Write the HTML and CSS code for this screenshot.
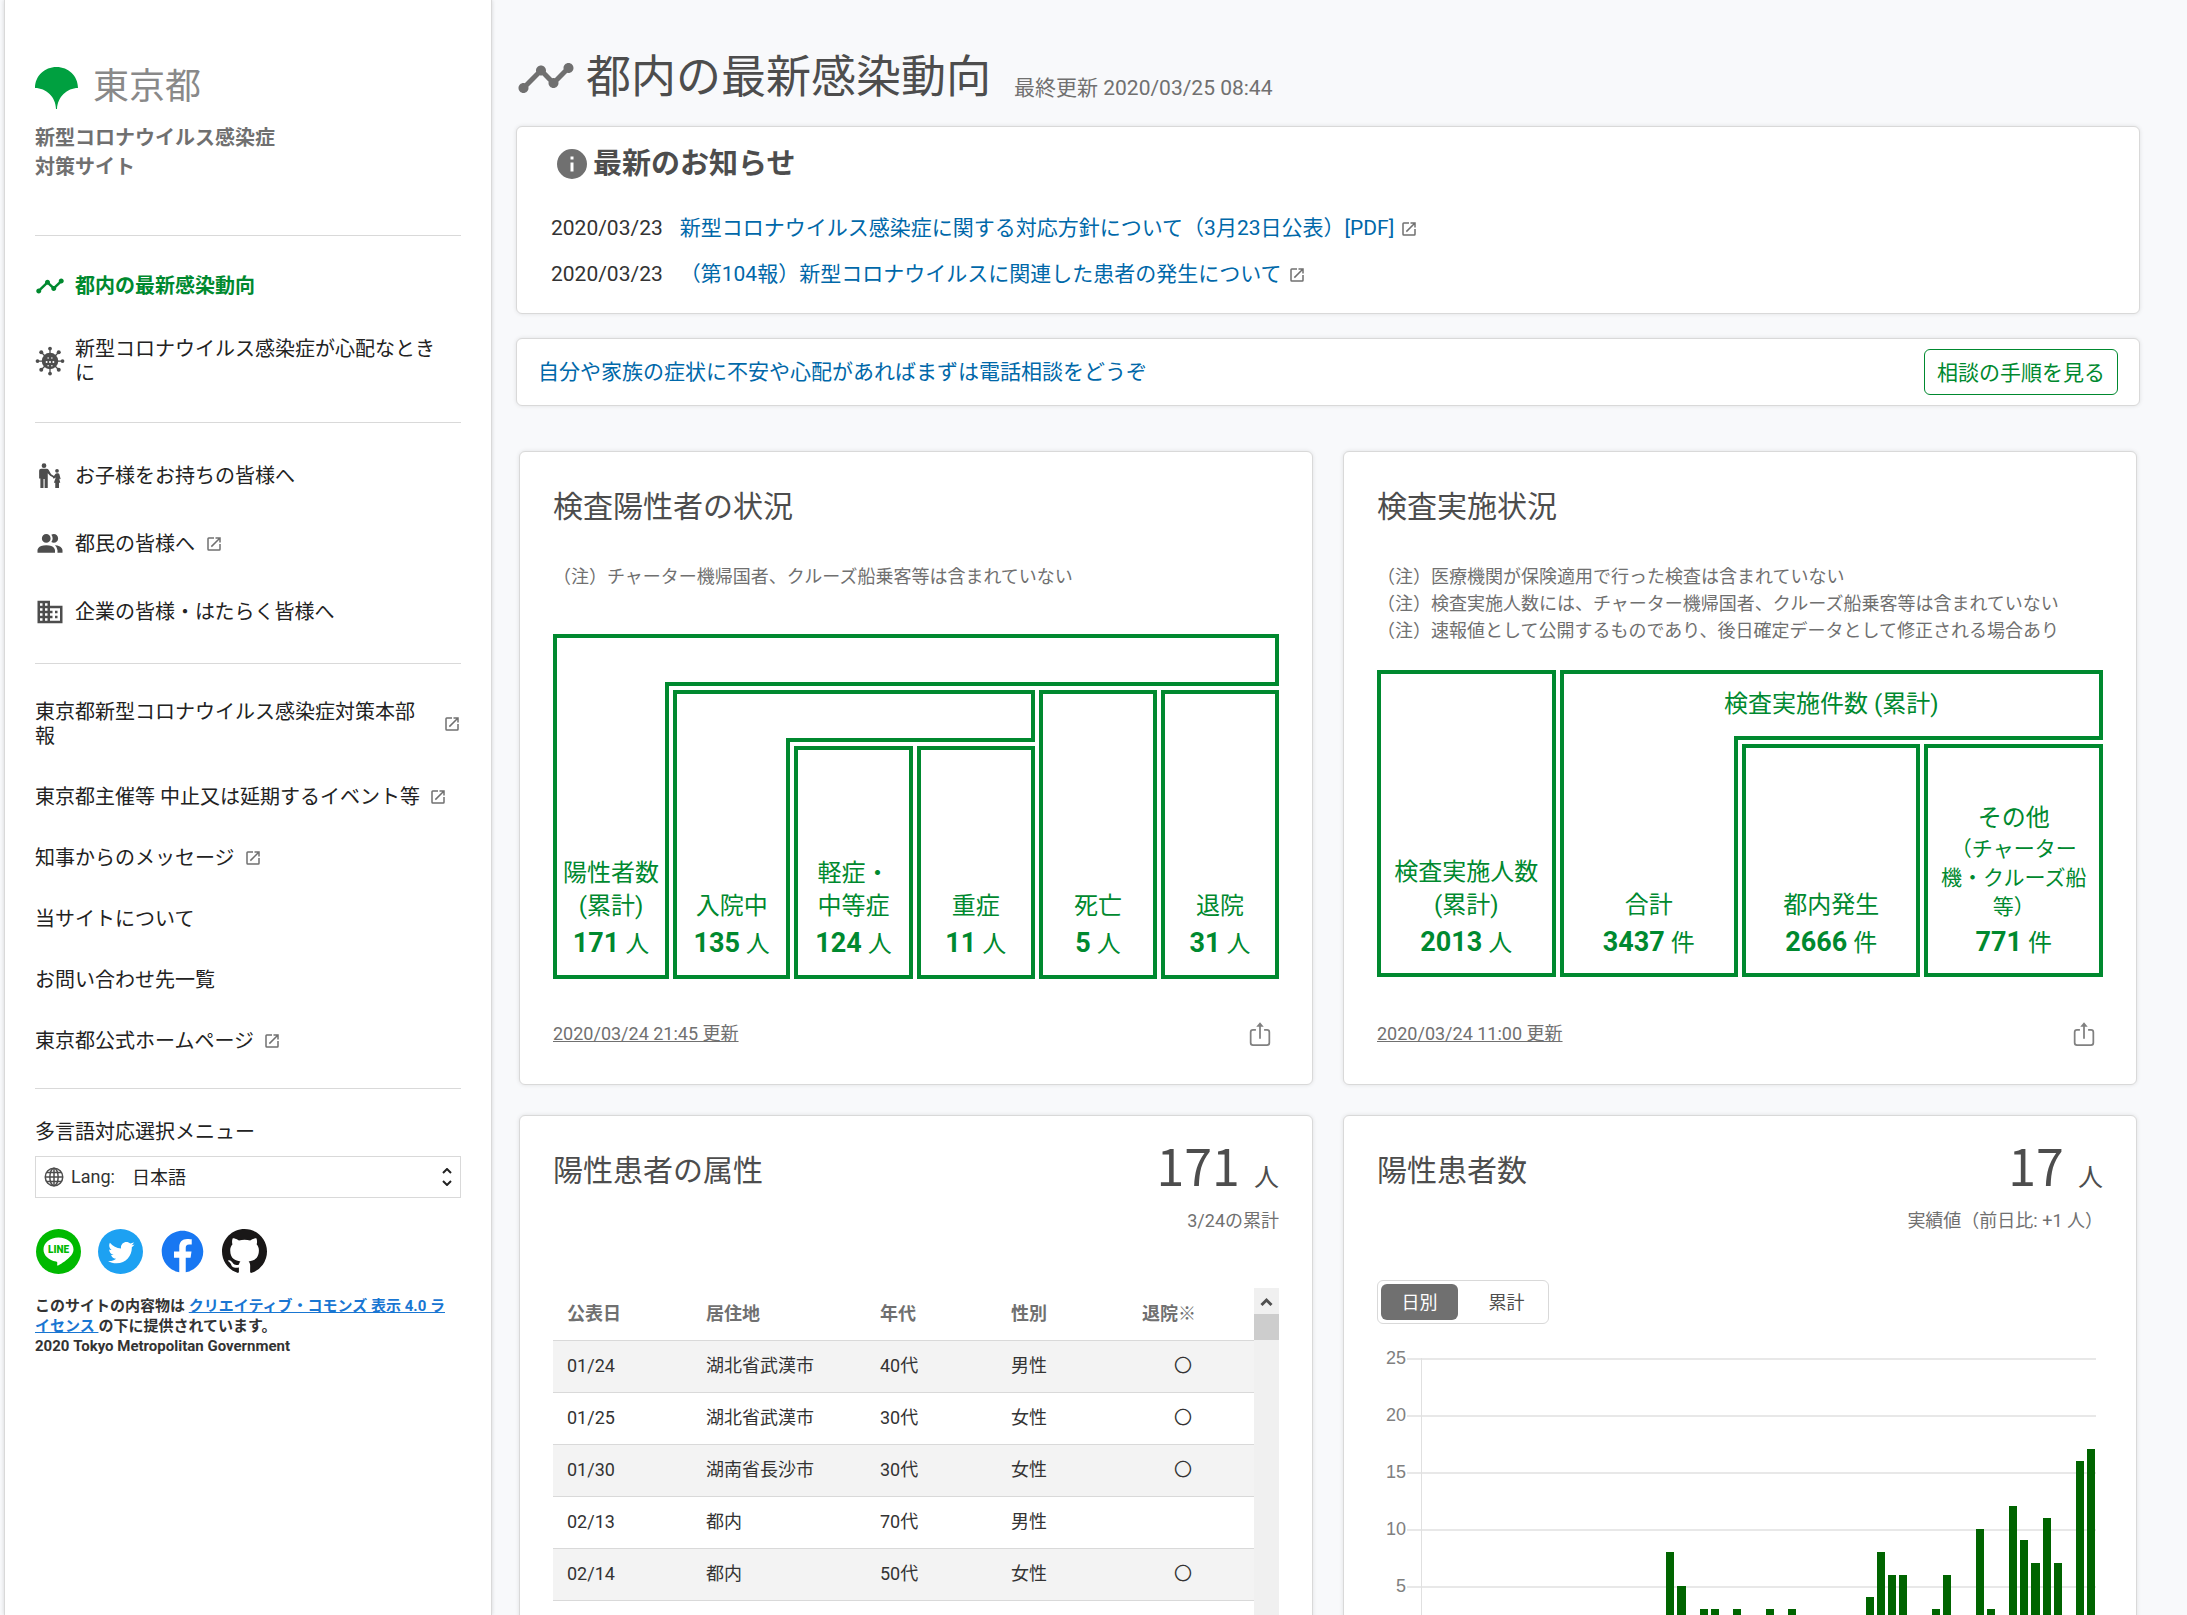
FILE: index.html
```
<!DOCTYPE html>
<html lang="ja">
<head>
    <meta charset="UTF-8">
    <meta name="viewport" content="width=device-width, initial-scale=1.0">
    <title>都内の最新感染動向 | 東京都 新型コロナウイルス感染症対策サイト</title>
    <link rel="stylesheet" href="styles.css">
</head>
<body>
    <!-- icons -->
    <svg class="sprite" aria-hidden="true">
        <symbol id="i-timeline" viewBox="0 0 24 24">
            <path d="M23 8c0 1.1-.9 2-2 2-.18 0-.35-.02-.51-.07l-3.56 3.55c.05.16.07.34.07.52 0 1.1-.9 2-2 2s-2-.9-2-2c0-.18.02-.36.07-.52l-2.55-2.55c-.16.05-.34.07-.52.07s-.36-.02-.52-.07l-4.55 4.56c.05.16.07.33.07.51 0 1.1-.9 2-2 2s-2-.9-2-2 .9-2 2-2c.18 0 .35.02.51.07l4.56-4.55C8.02 9.36 8 9.18 8 9c0-1.1.9-2 2-2s2 .9 2 2c0 .18-.02.36-.07.52l2.55 2.55c.16-.05.34-.07.52-.07s.36.02.52.07l3.55-3.56C19.02 8.35 19 8.18 19 8c0-1.1.9-2 2-2s2 .9 2 2z"/>
        </symbol>
        <symbol id="i-external" viewBox="0 0 24 24">
            <path d="M14 3v2h3.59l-9.83 9.83 1.41 1.41L19 6.41V10h2V3m-2 16H5V5h7V3H5a2 2 0 0 0-2 2v14a2 2 0 0 0 2 2h14a2 2 0 0 0 2-2v-7h-2v7z"/>
        </symbol>
        <symbol id="i-info" viewBox="0 0 24 24">
            <path d="M13 9h-2V7h2m0 10h-2v-6h2m-1-9a10 10 0 1 0 0 20 10 10 0 0 0 0-20z"/>
        </symbol>
        <symbol id="i-people" viewBox="0 0 24 24">
            <path d="M16 17v2H2v-2s0-4 7-4 7 4 7 4m-3.5-9.5A3.5 3.5 0 1 0 9 11a3.5 3.5 0 0 0 3.5-3.5m3.44 5.5A5.32 5.32 0 0 1 18 17v2h4v-2s0-3.63-6.06-4M15 4a3.39 3.39 0 0 0-1.93.59 5 5 0 0 1 0 5.82A3.39 3.39 0 0 0 15 11a3.5 3.5 0 0 0 0-7z"/>
        </symbol>
        <symbol id="i-building" viewBox="0 0 24 24">
            <path d="M18 15h-2v2h2m0-6h-2v2h2m2 6h-8v-2h2v-2h-2v-2h2v-2h-2V9h8M10 7H8V5h2m0 6H8V9h2m0 6H8v-2h2m0 6H8v-2h2M6 7H4V5h2m0 6H4V9h2m0 6H4v-2h2m0 6H4v-2h2m6-10V3H2v18h20V7H12z"/>
        </symbol>
        <symbol id="i-share" viewBox="0 0 24 24">
            <path d="M8.5 8.500H6A2 2 0 0 0 4 10.500v9A2 2 0 0 0 6 21.500h12a2 2 0 0 0 2-2v-9A2 2 0 0 0 18 8.500h-2.500M12 16V4" fill="none" stroke="currentColor" stroke-width="1.500"/>
            <path d="M12 2l3.200 3.800H8.800z"/>
        </symbol>
        <symbol id="i-family" viewBox="0 0 24 24">
            <circle cx="7.200" cy="3.700" r="1.900"/>
            <circle cx="17.600" cy="7.800" r="1.500"/>
            <path d="M5 6.200h4.400c.7 0 1.200.3 1.600.9l1.900 3.400 2.600 1.700-.6 1.100-2.800-1.600-1.900-2v11.900H7.700v-7.200h-.9v7.200H4.300V14H3.300V7.900C3.300 6.900 4 6.200 5 6.200z"/>
            <path d="M16.700 9.700h1.600c.6 0 1 .3 1.200.9l1 3.700-.8.3-.5-1 1 3.800h-1v4.200h-3v-4.200h-1.100l1.500-4.300-1.700 1.100-.6-1 2-2.800c.2-.4.700-.7 1.400-.7z"/>
        </symbol>
        <symbol id="i-virus" viewBox="0 0 24 24">
            <path d="M12 2v20M2 12h20M5 5l14 14M19 5L5 19" stroke="currentColor" stroke-width="1"/>
            <circle cx="12" cy="12" r="6.600"/>
            <circle cx="12" cy="2" r="1.500"/><circle cx="12" cy="22" r="1.500"/>
            <circle cx="2" cy="12" r="1.500"/><circle cx="22" cy="12" r="1.500"/>
            <circle cx="5" cy="5" r="1.600"/><circle cx="19" cy="5" r="1.600"/>
            <circle cx="5" cy="19" r="1.600"/><circle cx="19" cy="19" r="1.600"/>
            <g fill="#fff">
                <circle cx="9.300" cy="12.700" r=".8"/><circle cx="12" cy="12.700" r=".8"/><circle cx="14.700" cy="12.700" r=".8"/>
                <circle cx="10.500" cy="9.500" r=".6"/><circle cx="13.500" cy="9.500" r=".6"/>
                <circle cx="10.500" cy="15.700" r=".6"/><circle cx="13.500" cy="15.700" r=".6"/>
            </g>
        </symbol>
        <symbol id="i-globe" viewBox="0 0 24 24">
            <g fill="none" stroke="currentColor" stroke-width="1.800">
                <circle cx="12" cy="12" r="10.500"/>
                <ellipse cx="12" cy="12" rx="5" ry="10.500"/>
                <path d="M12 1.500v21M1.500 12h21M3.500 6.500h17M3.500 17.500h17"/>
            </g>
        </symbol>
    </svg>

    <div class="app">
        <nav class="side">
            <header class="side-header">
                <a href="#" class="logo">
                    <svg class="logo-mark" viewBox="0 0 43 42"><path d="M0 21C0 9 9.500 0 21.500 0S43 9 43 21c-11 0-20.500 9-21 21h-1C21 30 11 21 0 21z" fill="#00a040"/></svg>
                    <span class="logo-text">東京都</span>
                </a>
                <h1 class="site-title">新型コロナウイルス感染症<br>対策サイト</h1>
            </header>

            <ul class="menu menu-icons">
                <li><a href="#" class="active"><svg><use href="#i-timeline"/></svg><span>都内の最新感染動向</span></a></li>
                <li><a href="#"><svg><use href="#i-virus"/></svg><span>新型コロナウイルス感染症が心配なとき<br>に</span></a></li>
            </ul>
            <ul class="menu menu-icons menu-people">
                <li><a href="#"><svg><use href="#i-family"/></svg><span>お子様をお持ちの皆様へ</span></a></li>
                <li><a href="#"><svg><use href="#i-people"/></svg><span>都民の皆様へ</span><svg class="ext"><use href="#i-external"/></svg></a></li>
                <li><a href="#"><svg><use href="#i-building"/></svg><span>企業の皆様・はたらく皆様へ</span></a></li>
            </ul>
            <ul class="menu menu-links">
                <li><a href="#" class="spread"><span>東京都新型コロナウイルス感染症対策本部<br>報</span><svg class="ext"><use href="#i-external"/></svg></a></li>
                <li><a href="#"><span>東京都主催等 中止又は延期するイベント等</span><svg class="ext"><use href="#i-external"/></svg></a></li>
                <li><a href="#"><span>知事からのメッセージ</span><svg class="ext"><use href="#i-external"/></svg></a></li>
                <li><a href="#"><span>当サイトについて</span></a></li>
                <li><a href="#"><span>お問い合わせ先一覧</span></a></li>
                <li><a href="#"><span>東京都公式ホームページ</span><svg class="ext"><use href="#i-external"/></svg></a></li>
            </ul>

            <footer class="side-footer">
                <label for="lang" class="lang-label">多言語対応選択メニュー</label>
                <div class="lang">
                    <svg class="lang-globe"><use href="#i-globe"/></svg>
                    <span>Lang:</span>
                    <select id="lang">
                        <option>日本語</option>
                        <option>English</option>
                    </select>
                    <svg class="lang-arrow" viewBox="0 0 10 18"><path d="M1 5l4-4 4 4M1 13l4 4 4-4" fill="none" stroke="#222" stroke-width="2"/></svg>
                </div>
                <div class="sns">
                    <a href="#" aria-label="LINE">
                        <svg viewBox="0 0 45 45"><circle cx="22.500" cy="22.500" r="22.500" fill="#00b900"/><path d="M22.500 8.500c-8.300 0-15 5.400-15 12 0 6 5.400 11 12.600 11.900 1 .2 1.400.9 1.200 2-.2 1.500-.4 2.500.6 2.100 1.500-.6 7.900-4.500 11.500-8.300 2.700-2.200 4.100-4.900 4.100-7.700 0-6.600-6.700-12-15-12z" fill="#fff"/><text x="22.500" y="24" class="line-text">LINE</text></svg>
                    </a>
                    <a href="#" aria-label="Twitter">
                        <svg viewBox="0 0 400 400"><circle cx="200" cy="200" r="200" fill="#1da1f2"/><path d="M163.400 305.500c88.700 0 137.200-73.500 137.200-137.200 0-2.100 0-4.200-.1-6.200 9.400-6.800 17.600-15.300 24.100-25-8.600 3.800-17.900 6.400-27.700 7.600 10-6 17.600-15.400 21.200-26.700-9.300 5.500-19.600 9.500-30.600 11.700-8.800-9.400-21.300-15.200-35.200-15.200-26.600 0-48.200 21.600-48.200 48.200 0 3.800.4 7.500 1.300 11-40.100-2-75.600-21.200-99.400-50.400-4.100 7.100-6.500 15.400-6.500 24.200 0 16.700 8.500 31.500 21.500 40.100-7.900-.2-15.300-2.400-21.800-6v.6c0 23.400 16.600 42.800 38.700 47.300-4 1.100-8.300 1.700-12.700 1.700-3.100 0-6.100-.3-9.100-.9 6.100 19.200 23.900 33.100 45 33.500-16.500 12.900-37.300 20.600-59.900 20.600-3.900 0-7.700-.2-11.500-.7 21.300 13.800 46.600 21.800 73.700 21.800" fill="#fff"/></svg>
                    </a>
                    <a href="#" aria-label="Facebook">
                        <svg viewBox="-1 -1 26 26"><path d="M24 12.070C24 5.410 18.630 0 12 0S0 5.410 0 12.070C0 18.100 4.390 23.090 10.130 24v-8.440H7.080v-3.490h3.050V9.410c0-3.020 1.790-4.690 4.530-4.690 1.310 0 2.680.24 2.680.24v2.970h-1.510c-1.490 0-1.960.93-1.960 1.890v2.250h3.330l-.53 3.490h-2.800V24C19.610 23.090 24 18.100 24 12.070z" fill="#1877f2"/></svg>
                    </a>
                    <a href="#" aria-label="GitHub">
                        <svg viewBox="0 0 16 16"><path d="M8 0C3.580 0 0 3.580 0 8c0 3.540 2.290 6.530 5.470 7.590.4.070.55-.17.55-.38 0-.19-.01-.82-.01-1.490-2.010.37-2.530-.49-2.690-.94-.09-.23-.48-.94-.82-1.130-.28-.15-.68-.52-.01-.53.63-.01 1.080.58 1.230.82.72 1.210 1.870.87 2.330.66.07-.52.28-.87.51-1.070-1.780-.2-3.640-.89-3.640-3.950 0-.87.31-1.590.82-2.150-.08-.2-.36-1.020.08-2.120 0 0 .67-.21 2.200.82.64-.18 1.320-.27 2-.27s1.360.09 2 .27c1.530-1.040 2.200-.82 2.200-.82.44 1.100.16 1.920.08 2.120.51.56.82 1.270.82 2.150 0 3.070-1.870 3.750-3.650 3.950.29.25.54.73.54 1.480 0 1.070-.01 1.930-.01 2.200 0 .21.15.46.55.38A8.010 8.010 0 0 0 16 8c0-4.420-3.580-8-8-8z" fill="#191717"/></svg>
                    </a>
                </div>
                <small class="copyright">このサイトの内容物は <a href="#">クリエイティブ・コモンズ 表示 4.0 ライセンス </a>の下に提供されています。<br>2020 Tokyo Metropolitan Government</small>
            </footer>
        </nav>

        <main class="main">
            <header class="page-header">
                <svg class="page-icon"><use href="#i-timeline"/></svg>
                <h2>都内の最新感染動向</h2>
                <span class="updated">最終更新 2020/03/25 08:44</span>
            </header>

            <section class="news">
                <h3><svg><use href="#i-info"/></svg>最新のお知らせ</h3>
                <ul>
                    <li><time>2020/03/23</time><a href="#">新型コロナウイルス感染症に関する対応方針について（3月23日公表）[PDF]<svg class="ext"><use href="#i-external"/></svg></a></li>
                    <li><time>2020/03/23</time><a href="#">（第104報）新型コロナウイルスに関連した患者の発生について<svg class="ext"><use href="#i-external"/></svg></a></li>
                </ul>
            </section>

            <section class="consult">
                <a href="#">自分や家族の症状に不安や心配があればまずは電話相談をどうぞ</a>
                <button type="button">相談の手順を見る</button>
            </section>

            <div class="cards">
                <section class="card">
                    <h3>検査陽性者の状況</h3>
                    <ul class="notes">
                        <li>（注）チャーター機帰国者、クルーズ船乗客等は含まれていない</li>
                    </ul>
                    <div class="tree tree-confirmed">
                        <div class="band"></div>
                        <div class="cell stem"><span>陽性者数<br>(累計)</span><span><b>171</b> 人</span></div>
                        <div class="inner">
                            <div class="tree tree-hospital">
                                <div class="band"></div>
                                <div class="cell stem"><span>入院中</span><span><b>135</b> 人</span></div>
                                <div class="inner">
                                    <div class="cell"><span>軽症・<br>中等症</span><span><b>124</b> 人</span></div>
                                    <div class="cell"><span>重症</span><span><b>11</b> 人</span></div>
                                </div>
                            </div>
                            <div class="cell"><span>死亡</span><span><b>5</b> 人</span></div>
                            <div class="cell"><span>退院</span><span><b>31</b> 人</span></div>
                        </div>
                    </div>
                    <footer>
                        <time>2020/03/24 21:45 更新</time>
                        <button type="button" class="share" aria-label="共有"><svg><use href="#i-share"/></svg></button>
                    </footer>
                </section>

                <section class="card">
                    <h3>検査実施状況</h3>
                    <ul class="notes">
                        <li>（注）医療機関が保険適用で行った検査は含まれていない</li>
                        <li>（注）検査実施人数には、チャーター機帰国者、クルーズ船乗客等は含まれていない</li>
                        <li>（注）速報値として公開するものであり、後日確定データとして修正される場合あり</li>
                    </ul>
                    <div class="tested">
                        <div class="cell"><span>検査実施人数<br>(累計)</span><span><b>2013</b> 人</span></div>
                        <div class="tree tree-tested">
                            <div class="band">検査実施件数 (累計)</div>
                            <div class="cell stem"><span>合計</span><span><b>3437</b> 件</span></div>
                            <div class="inner">
                                <div class="cell"><span>都内発生</span><span><b>2666</b> 件</span></div>
                                <div class="cell"><span>その他</span><span class="sub">（チャーター<br>機・クルーズ船<br>等）</span><span><b>771</b> 件</span></div>
                            </div>
                        </div>
                    </div>
                    <footer>
                        <time>2020/03/24 11:00 更新</time>
                        <button type="button" class="share" aria-label="共有"><svg><use href="#i-share"/></svg></button>
                    </footer>
                </section>

                <section class="card">
                    <div class="card-head">
                        <h3>陽性患者の属性</h3>
                        <div class="summary">
                            <p class="count">171 <small>人</small></p>
                            <p class="sub-count">3/24の累計</p>
                        </div>
                    </div>
                    <div class="table-wrap">
                        <table>
                            <thead>
                                <tr><th>公表日</th><th>居住地</th><th>年代</th><th>性別</th><th>退院※</th></tr>
                            </thead>
                            <tbody>
                                <tr><td>01/24</td><td>湖北省武漢市</td><td>40代</td><td>男性</td><td>〇</td></tr>
                                <tr><td>01/25</td><td>湖北省武漢市</td><td>30代</td><td>女性</td><td>〇</td></tr>
                                <tr><td>01/30</td><td>湖南省長沙市</td><td>30代</td><td>女性</td><td>〇</td></tr>
                                <tr><td>02/13</td><td>都内</td><td>70代</td><td>男性</td><td></td></tr>
                                <tr><td>02/14</td><td>都内</td><td>50代</td><td>女性</td><td>〇</td></tr>
                            </tbody>
                        </table>
                        <div class="scrollbar">
                            <svg viewBox="0 0 25 26"><path d="M7.500 17l5-5 5 5" fill="none" stroke="#505050" stroke-width="3"/></svg>
                            <div class="thumb"></div>
                        </div>
                    </div>
                </section>

                <section class="card">
                    <div class="card-head">
                        <h3>陽性患者数</h3>
                        <div class="summary">
                            <p class="count">17 <small>人</small></p>
                            <p class="sub-count">実績値（前日比: +1 人）</p>
                        </div>
                    </div>
                    <div class="toggle">
                        <button type="button" class="on">日別</button>
                        <button type="button">累計</button>
                    </div>
                    <div class="chart">
                        <div class="grid-row"><span>25</span></div>
                        <div class="grid-row"><span>20</span></div>
                        <div class="grid-row"><span>15</span></div>
                        <div class="grid-row"><span>10</span></div>
                        <div class="grid-row"><span>5</span></div>
                        <div class="bars" id="bars"></div>
                    </div>
                </section>
            </div>
        </main>
    </div>

    <script>
        // 1/24 から 3/24 までの日別の陽性患者数
        const daily = [
            0, 0, 0, 0, 0, 0, 0, 0, 0, 0, 0, 0, 0, 0, 0, 0, 0, 0, 0, 0,
            0, 0, 8, 5, 0, 3, 3, 0, 3, 0, 0, 3, 0, 3, 0, 0, 0, 0, 0, 0,
            4, 8, 6, 6, 0, 0, 3, 6, 0, 0, 10, 3, 0, 12, 9, 7, 11, 7, 0, 16, 17
        ];
        const max = 25;
        const bars = document.getElementById('bars');

        daily.forEach(count => {
            const bar = document.createElement('i');
            bar.style.height = (count / max * 100) + '%';
            bars.appendChild(bar);
        });
    </script>
</body>
</html>
```
FILE: styles.css
```
/* styles.css */
* {
    box-sizing: border-box;
}

body {
    margin: 0;
    background-color: #f8f9fb;
    color: #333;
    font-family: Roboto, "Noto Sans CJK JP", sans-serif;
    font-size: 20px;
    line-height: 24px;
}

h1, h2, h3, p, ul {
    margin: 0;
    padding: 0;
}

ul {
    list-style: none;
}

a {
    color: #0068a9;
    text-decoration: none;
}

button, select {
    font-family: inherit;
    cursor: pointer;
}

svg {
    fill: currentColor;
    flex-shrink: 0;
}

.sprite {
    display: none;
}

.ext {
    width: 18px;
    height: 18px;
    color: #707070;
}

.app {
    display: flex;
    height: 100vh;
    overflow: hidden;
}

/* sidebar */
.side {
    flex: 0 0 488px;
    margin-left: 4px;
    padding: 67px 30px 0;
    background-color: #fff;
    border: 1px solid #d9d9d9;
    border-width: 0 1px;
    box-shadow: 0 0 4px rgba(0,0,0,0.15);
}

.side-header {
    height: 168px;
}

.logo {
    display: flex;
    align-items: center;
    gap: 15px;
    height: 42px;
}

.logo-mark {
    width: 43px;
    height: 42px;
}

.logo-text {
    padding-bottom: 2px;
    color: #898989;
    font-size: 36px;
    line-height: 40px;
}

.site-title {
    margin-top: 15px;
    color: #707070;
    font-size: 20px;
    line-height: 29px;
}

.menu {
    border-top: 1px solid #d9d9d9;
}

.menu a {
    display: flex;
    align-items: center;
    gap: 9px;
    color: #222;
}

.menu-icons {
    padding: 35px 0 37px;
}

.menu-icons a {
    gap: 10px;
    min-height: 30px;
}

.menu-icons svg:first-child {
    width: 30px;
    height: 30px;
    color: #4d4d4d;
}

.menu-icons li + li {
    margin-top: 36px;
}

.menu-people {
    padding: 38px 0 36px;
}

.menu-people li + li {
    margin-top: 38px;
}

.menu .active,
.menu .active svg:first-child {
    color: #00892f;
    font-weight: bold;
}

.menu-links {
    padding: 36px 0 35px;
    border-bottom: 1px solid #d9d9d9;
}

.menu-links li + li {
    margin-top: 37px;
}

.menu-links .spread {
    justify-content: space-between;
}

.lang-label {
    display: block;
    margin-top: 31px;
    color: #222;
}

.lang {
    display: flex;
    align-items: center;
    height: 42px;
    margin-top: 12px;
    padding: 0 8px;
    border: 1px solid #d9d9d9;
    font-size: 18px;
}

.lang-globe {
    width: 20px;
    height: 20px;
    margin-right: 7px;
    color: #4d4d4d;
}

.lang select {
    flex: 1;
    margin-left: 17px;
    border: none;
    background: none;
    color: #222;
    font-size: 18px;
    appearance: none;
}

.lang-arrow {
    width: 10px;
    height: 18px;
}

.sns {
    display: flex;
    gap: 17px;
    margin: 31px 0 0 1px;
}

.sns svg {
    display: block;
    width: 45px;
    height: 45px;
}

.line-text {
    fill: #00b900;
    font-size: 10px;
    font-weight: 900;
    text-anchor: middle;
}

.copyright {
    display: block;
    margin-top: 22px;
    padding-right: 12px;
    font-size: 15px;
    font-weight: bold;
    line-height: 20px;
}

.copyright a {
    color: #1976d2;
    text-decoration: underline;
}

/* main */
.main {
    flex: 1;
    padding: 50px 47px 0 24px;
}

.page-header {
    display: flex;
    align-items: flex-end;
    height: 54px;
    color: #4d4d4d;
}

.page-icon {
    width: 60px;
    height: 60px;
    margin-bottom: -4px;
    color: #707070;
}

.page-header h2 {
    margin-left: 10px;
    font-size: 45px;
    font-weight: normal;
    line-height: 52px;
}

.updated {
    margin: 0 0 4px 23px;
    color: #707070;
    font-size: 21px;
}

.news, .consult, .card {
    background-color: #fff;
    border: 1px solid #d9d9d9;
    border-radius: 6px;
    box-shadow: 0 0 4px rgba(0,0,0,0.1);
}

.news {
    height: 188px;
    margin-top: 22px;
    padding: 20px 34px;
}

.news h3 {
    display: flex;
    align-items: center;
    gap: 3px;
    height: 34px;
    margin-left: 3px;
    color: #4d4d4d;
    font-size: 29px;
    line-height: 34px;
}

.news h3 svg {
    width: 36px;
    height: 36px;
    color: #707070;
}

.news ul {
    margin-top: 24px;
}

.news li {
    display: flex;
    gap: 17px;
    height: 46px;
    line-height: 46px;
    font-size: 21px;
}

.news .ext {
    margin-left: 6px;
    vertical-align: -3px;
}

.consult {
    display: flex;
    align-items: center;
    justify-content: space-between;
    height: 68px;
    margin-top: 24px;
    padding: 0 21px;
    font-size: 21px;
}

.consult button {
    height: 46px;
    padding: 0 12px 2px;
    border: 1px solid #00892f;
    border-radius: 6px;
    background-color: #fff;
    color: #00892f;
    font-size: 21px;
}

.cards {
    display: grid;
    grid-template-columns: 1fr 1fr;
    gap: 30px;
    margin: 45px 3px 0;
}

.card {
    display: flex;
    flex-direction: column;
    min-height: 634px;
    padding: 34px 33px 36px;
}

.card h3 {
    color: #4d4d4d;
    font-size: 30px;
    font-weight: normal;
    line-height: 42px;
}

.notes {
    margin: 35px 0 26px;
    color: #707070;
    font-size: 18px;
    line-height: 27px;
}

.card footer {
    display: flex;
    align-items: center;
    justify-content: space-between;
    margin-top: auto;
    color: #707070;
    font-size: 18px;
}

.card time {
    text-decoration: underline;
}

.share {
    display: flex;
    margin-right: 5px;
    padding: 0;
    border: none;
    background: none;
    color: #808080;
}

.share svg {
    width: 28px;
    height: 28px;
}

/* nested boxes, every outline is 4px with a 4px gap */
.tree {
    display: grid;
    grid-template-rows: auto 1fr;
    color: #00892f;
}

.band {
    grid-column: 1 / -1;
    height: 48px;
    border: 4px solid #00892f;
    border-bottom: none;
    text-align: center;
}

.inner {
    display: grid;
    gap: 4px;
    padding: 4px 0 0 4px;
    border-top: 4px solid #00892f;
}

.cell {
    display: flex;
    flex-direction: column;
    justify-content: flex-end;
    padding-bottom: 12px;
    border: 4px solid #00892f;
    color: #00892f;
    font-size: 24px;
    line-height: 33px;
    text-align: center;
    white-space: nowrap;
}

.cell b {
    font-size: 27px;
    line-height: 40px;
}

.cell .sub {
    font-size: 21px;
    line-height: 29px;
}

.stem {
    border-top: none;
}

.tree-confirmed {
    grid-template-columns: calc((100% - 30px) / 6) 1fr;
    height: 345px;
    margin-top: 18px;
}

.tree-confirmed > .inner {
    grid-template-columns: repeat(5, 1fr);
}

.tree-hospital {
    grid-column: span 3;
    grid-template-columns: calc((100% - 10px) / 3) 1fr;
}

.tree-hospital > .inner {
    grid-template-columns: 1fr 1fr;
}

.tested {
    display: grid;
    grid-template-columns: repeat(4, 1fr);
    gap: 4px;
    height: 307px;
}

.tested .cell {
    padding-bottom: 11px;
}

.tree-tested {
    grid-column: span 3;
    grid-template-columns: calc((100% - 8px) / 3) 1fr;
}

.tree-tested .band {
    height: 66px;
    font-size: 24px;
    line-height: 60px;
}

.tree-tested > .inner {
    grid-template-columns: 1fr 1fr;
}

/* patients table */
.card-head {
    display: flex;
    justify-content: space-between;
    height: 130px;
}

.summary {
    margin-top: -6px;
    color: #4d4d4d;
    font-family: "Noto Sans CJK JP", sans-serif;
    text-align: right;
}

.count {
    font-size: 50px;
    line-height: 40px;
}

.count small {
    margin-left: 3px;
    font-size: 25px;
}

.sub-count {
    margin-top: 14px;
    color: #707070;
    font-family: Roboto, "Noto Sans CJK JP", sans-serif;
    font-size: 18px;
}

.table-wrap {
    display: flex;
    height: 410px;
    margin-top: 8px;
    overflow: hidden;
}

table {
    flex: 1;
    height: 312px;
    border-collapse: collapse;
    font-size: 18px;
}

th, td {
    height: 52px;
    padding: 0 14px;
    border-bottom: 1px solid #d9d9d9;
    text-align: left;
}

th {
    color: #707070;
}

th:nth-child(1) {
    width: 139px;
}

th:nth-child(2) {
    width: 174px;
}

th:nth-child(3), th:nth-child(4) {
    width: 131px;
}

td:last-child {
    padding-right: 30px;
    text-align: center;
}

tbody tr:nth-child(odd) {
    background-color: #f3f3f3;
}

.scrollbar {
    width: 25px;
    background-color: #f0f0f0;
}

.scrollbar svg {
    display: block;
    width: 25px;
    height: 26px;
}

.thumb {
    height: 26px;
    background-color: #cdcdcd;
}

/* daily chart */
.toggle {
    display: flex;
    align-self: flex-start;
    padding: 3px;
    border: 1px solid #d9d9d9;
    border-radius: 6px;
}

.toggle button {
    width: 77px;
    height: 36px;
    padding: 0 0 2px;
    border: none;
    border-radius: 6px;
    background: none;
    color: #4d4d4d;
    font-size: 18px;
}

.toggle button + button {
    margin-left: 10px;
}

.toggle .on {
    background-color: #707070;
    color: #fff;
}

.chart {
    position: relative;
    margin: 34px 7px 60px 0;
}

.grid-row {
    display: flex;
    height: 57px;
    color: #808080;
    font-family: "Liberation Sans", Arial, sans-serif;
    font-size: 18px;
    line-height: 20px;
}

.grid-row span {
    width: 29px;
    margin: -10px 1px 0 0;
    text-align: right;
}

.grid-row::after {
    content: "";
    flex: 1;
    border-top: 2px solid #e8e8e8;
}

.bars {
    position: absolute;
    inset: 0 0 0 44px;
    display: flex;
    align-items: flex-end;
    gap: 3px;
    padding: 0 1px;
    border-left: 1px solid #e0e0e0;
}

.bars i {
    flex: 1;
    background-color: #006400;
}
```
